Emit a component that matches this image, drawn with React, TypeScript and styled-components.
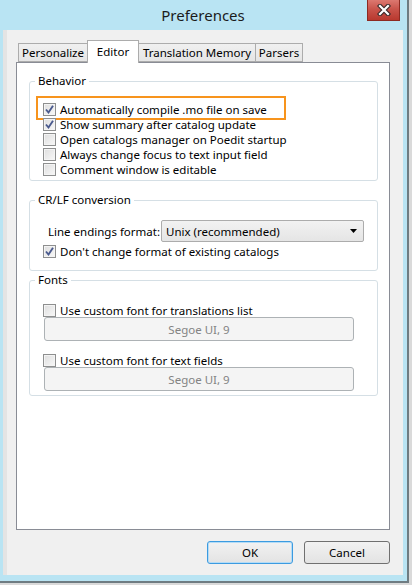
import React from 'react';
import styled, { createGlobalStyle } from 'styled-components';

const Global = createGlobalStyle`
  *, *::before, *::after { box-sizing: border-box; }
  html, body { margin: 0; padding: 0; background: #dadada; }
  body {
    width: 412px; height: 585px; overflow: hidden;
    font-family: "Segoe UI", "Noto Sans", sans-serif;
    font-size: 11.5px; color: #000;
  }
`;

const Window = styled.div`
  width: 409px;
  height: 583px;
  background: #b9e4f3;
  border-right: 2px solid #6f7c82;
  border-bottom: 2px solid #6f7c82;
  padding: 0 4px 6px 3px;
  display: flex;
  flex-direction: column;
`;

const TitleBar = styled.div`
  height: 30px;
  display: grid;
  grid-template-columns: 1fr auto 1fr;
  align-items: start;
`;

const Title = styled.div`
  grid-column: 2;
  margin-top: 5px;
  font-size: 15px;
  line-height: 20px;
  color: #1b1b1b;
`;

const Close = styled.div`
  grid-column: 3;
  justify-self: end;
  margin-right: 3px;
  width: 33px;
  height: 21px;
  background: linear-gradient(#dc7870 0%, #c9544b 45%, #b8392f 100%);
  border: 1px solid #8d2a22;
  border-top: none;
  display: flex;
  align-items: center;
  justify-content: center;
`;

const Client = styled.div`
  flex: 1;
  background: #f0f0f0;
  border-left: 4px solid #e4e4e4;
  padding: 10px 13px 11px 9px;
  display: flex;
  flex-direction: column;
`;

const TabStrip = styled.div`
  height: 22px;
  display: flex;
  align-items: flex-end;
  padding-left: 2px;
`;

const Tab = styled.div<{ $active?: boolean; $w: number }>`
  width: ${p => p.$w}px;
  height: ${p => (p.$active ? 23 : 19)}px;
  margin-left: -1px;
  &:first-child { margin-left: 0; }
  margin-bottom: ${p => (p.$active ? -1 : 0)}px;
  position: relative;
  z-index: ${p => (p.$active ? 2 : 1)};
  border: 1px solid #acacac;
  border-bottom: ${p => (p.$active ? 'none' : '1px solid #acacac')};
  background: ${p => (p.$active ? '#fff' : 'linear-gradient(#f0f0f0, #e5e5e5)')};
  display: flex;
  align-items: ${p => (p.$active ? 'flex-start' : 'center')};
  justify-content: center;
  padding-top: ${p => (p.$active ? 3 : 0)}px;
  line-height: 16px;
  white-space: nowrap;
`;

const Panel = styled.div`
  width: 374px;
  height: 468px;
  border: 1px solid #898c95;
  background: #fff;
  padding: 9px 11px 0 12px;
  display: flex;
  flex-direction: column;
`;

const Group = styled.fieldset<{ $top: number }>`
  margin: ${p => p.$top}px 0 0 0;
  padding: 0;
  min-width: 0;
  border: 1px solid #d5dfe5;
  border-radius: 3px;
`;

const Legend = styled.legend`
  margin-left: 5px;
  padding: 0 3px;
  line-height: 18px;
  font-size: 11.5px;
`;

const GroupBody = styled.div<{ $pad: string }>`
  padding: ${p => p.$pad};
  display: flex;
  flex-direction: column;
`;

const Row = styled.div<{ $h?: number; $mt?: number }>`
  height: ${p => p.$h ?? 15}px;
  line-height: ${p => p.$h ?? 15}px;
  margin-top: ${p => p.$mt ?? 0}px;
  display: flex;
  align-items: center;
  gap: 4px;
  white-space: nowrap;
  position: relative;
`;

const Highlight = styled.div`
  position: absolute;
  left: -7px;
  top: -6px;
  width: 250px;
  height: 24px;
  border: 2px solid #f7941d;
  pointer-events: none;
`;

const Box = styled.span`
  width: 13px;
  height: 13px;
  flex: none;
  border: 1px solid #8e8f8f;
  background: linear-gradient(135deg, #dedede, #f8f8f8);
  box-shadow: inset 0 0 0 1px #f4f4f4;
  display: flex;
  align-items: center;
  justify-content: center;
`;

const SelectRow = styled.div`
  height: 22px;
  display: flex;
  align-items: center;
  padding-left: 5px;
`;

const SelectLabel = styled.span`
  width: 113px;
  white-space: nowrap;
`;

const Select = styled.div`
  width: 203px;
  height: 22px;
  border: 1px solid #acacac;
  border-radius: 2px;
  background: linear-gradient(#f2f2f2, #e5e5e5);
  display: flex;
  align-items: center;
  justify-content: space-between;
  padding: 0 6px 0 4px;
`;

const FontButton = styled.div`
  margin-left: 1px;
  width: 310px;
  height: 24px;
  border: 1px solid #adb2b5;
  border-radius: 3px;
  background: #f4f4f4;
  color: #838383;
  display: flex;
  align-items: center;
  justify-content: center;
`;

const Footer = styled.div`
  margin-top: 11px;
  display: flex;
  justify-content: flex-end;
  gap: 11px;
`;

const Button = styled.div<{ $default?: boolean }>`
  width: 86px;
  height: 23px;
  border: 1px solid ${p => (p.$default ? '#3c9be0' : '#707070')};
  border-radius: 3px;
  background: linear-gradient(#f2f2f2, #e3e3e3);
  box-shadow: ${p => (p.$default ? 'inset 0 0 0 1px #b5dcf6' : 'none')};
  display: flex;
  align-items: center;
  justify-content: center;
`;

const Check = ({ checked }: { checked?: boolean }) => (
  <Box>
    {checked && (
      <svg width="11" height="11" viewBox="0 0 11 11">
        <path d="M2 5.5 L4.5 8.5 L9 1.8" fill="none" stroke="#4a5a8e" strokeWidth="1.9" />
      </svg>
    )}
  </Box>
);

export default function App() {
  return (
    <>
      <Global />
      <Window>
        <TitleBar>
          <Title>Preferences</Title>
          <Close>
            <svg width="14" height="12" viewBox="0 0 14 12">
              <path d="M3 2 L11 10 M11 2 L3 10" stroke="#3a2a2a" strokeWidth="4.4" strokeLinecap="square" />
              <path d="M3 2 L11 10 M11 2 L3 10" stroke="#fff" strokeWidth="2.2" strokeLinecap="square" />
            </svg>
          </Close>
        </TitleBar>
        <Client>
          <TabStrip>
            <Tab $w={70}>Personalize</Tab>
            <Tab $w={52} $active>Editor</Tab>
            <Tab $w={118}>Translation Memory</Tab>
            <Tab $w={48}>Parsers</Tab>
          </TabStrip>
          <Panel>
            <Group $top={0}>
              <Legend>Behavior</Legend>
              <GroupBody $pad="12px 0 3px 13px">
                <Row>
                  <Highlight />
                  <Check checked />
                  <span>Automatically compile .mo file on save</span>
                </Row>
                <Row><Check checked /><span>Show summary after catalog update</span></Row>
                <Row><Check /><span>Open catalogs manager on Poedit startup</span></Row>
                <Row><Check /><span>Always change focus to text input field</span></Row>
                <Row><Check /><span>Comment window is editable</span></Row>
              </GroupBody>
            </Group>
            <Group $top={10}>
              <Legend>CR/LF conversion</Legend>
              <GroupBody $pad="11px 0 11px 13px">
                <SelectRow>
                  <SelectLabel>Line endings format:</SelectLabel>
                  <Select>
                    <span>Unix (recommended)</span>
                    <svg width="7" height="4" viewBox="0 0 7 4"><path d="M0 0 H7 L3.5 4 Z" fill="#000" /></svg>
                  </Select>
                </SelectRow>
                <Row $mt={2}><Check checked /><span>Don't change format of existing catalogs</span></Row>
              </GroupBody>
            </Group>
            <Group $top={0}>
              <Legend>Fonts</Legend>
              <GroupBody $pad="15px 0 4px 13px">
                <Row $h={13}><Check /><span>Use custom font for translations list</span></Row>
                <FontButton>Segoe UI, 9</FontButton>
                <Row $h={13} $mt={13}><Check /><span>Use custom font for text fields</span></Row>
                <FontButton>Segoe UI, 9</FontButton>
              </GroupBody>
            </Group>
          </Panel>
          <Footer>
            <Button $default>OK</Button>
            <Button>Cancel</Button>
          </Footer>
        </Client>
      </Window>
    </>
  );
}
